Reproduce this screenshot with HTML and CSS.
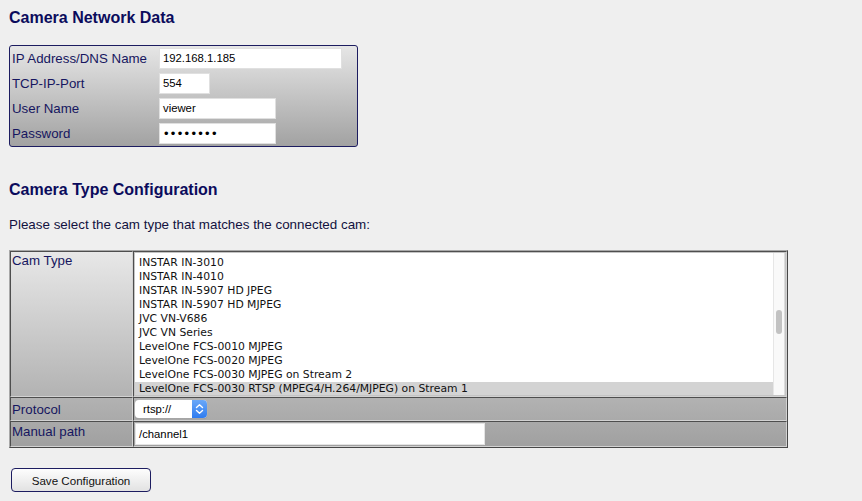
FILE: index.html
```html
<!DOCTYPE html>
<html>
<head>
<meta charset="utf-8">
<link rel="stylesheet" href="styles.css">
</head>
<body>
<h1 class="title first">Camera Network Data</h1>
<div class="netbox">
  <label class="lbl">IP Address/DNS Name</label>
  <div class="field w-ip">192.168.1.185</div>
  <label class="lbl">TCP-IP-Port</label>
  <div class="field w-port">554</div>
  <label class="lbl">User Name</label>
  <div class="field w-user">viewer</div>
  <label class="lbl">Password</label>
  <div class="field w-user pw">&#8226;&#8226;&#8226;&#8226;&#8226;&#8226;&#8226;&#8226;</div>
</div>

<h1 class="title second">Camera Type Configuration</h1>
<p class="intro">Please select the cam type that matches the connected cam:</p>

<table class="cfg">
  <tr class="row-cam">
    <td class="lcell">Cam Type</td>
    <td class="ccell flush">
      <div class="listbox">
        <div class="opts">
          <div class="opt">INSTAR IN-3010</div>
          <div class="opt">INSTAR IN-4010</div>
          <div class="opt">INSTAR IN-5907 HD JPEG</div>
          <div class="opt">INSTAR IN-5907 HD MJPEG</div>
          <div class="opt">JVC VN-V686</div>
          <div class="opt">JVC VN Series</div>
          <div class="opt">LevelOne FCS-0010 MJPEG</div>
          <div class="opt">LevelOne FCS-0020 MJPEG</div>
          <div class="opt">LevelOne FCS-0030 MJPEG on Stream 2</div>
          <div class="opt sel">LevelOne FCS-0030 RTSP (MPEG4/H.264/MJPEG) on Stream 1</div>
        </div>
        <div class="sbar"><div class="thumb"></div></div>
      </div>
    </td>
  </tr>
  <tr class="row-proto">
    <td class="lcell">Protocol</td>
    <td class="ccell">
      <div class="popup">
        <span class="ptext">rtsp://</span>
        <span class="parrow">
          <svg width="9" height="12" viewBox="0 0 9 12"><path d="M1.5 4.5 L4.5 1.8 L7.5 4.5 M1.5 7.5 L4.5 10.2 L7.5 7.5" fill="none" stroke="#fff" stroke-width="1.4" stroke-linecap="round" stroke-linejoin="round"/></svg>
        </span>
      </div>
    </td>
  </tr>
  <tr class="row-path">
    <td class="lcell">Manual path</td>
    <td class="ccell">
      <div class="field w-path">/channel1</div>
    </td>
  </tr>
</table>

<button class="save">Save Configuration</button>
</body>
</html>
```
FILE: styles.css
```css
html, body {
  margin: 0;
  padding: 0;
  background: #efefef;
}
body {
  padding: 0 9px;
  font-family: "Liberation Sans", Arial, sans-serif;
  font-size: 13.3px;
  color: #14145a;
}
.title {
  font-size: 16px;
  line-height: 20px;
  font-weight: bold;
  color: #0b0b5c;
  margin: 0;
}
.title.first { padding-top: 8px; margin-bottom: 17px; }
.title.second { margin-top: 33px; margin-bottom: 17px; }
.intro {
  margin: 0 0 17px;
  line-height: 16px;
  font-size: 13.4px;
  color: #121240;
}

.netbox {
  width: 343px;
  box-sizing: content-box;
  border: 1px solid #1c1c60;
  border-radius: 3px;
  background: linear-gradient(#e6e6e6, #a2a2a2);
  padding: 2px 2px 2px 2px;
  display: grid;
  grid-template-columns: 147px auto;
  grid-auto-rows: 21px;
  row-gap: 4px;
  align-items: center;
}
.lbl {
  color: #161660;
  font-size: 13.3px;
  padding-left: 0;
}
.field {
  background: #fff;
  border: 1px solid #e0e0e0;
  box-sizing: border-box;
  height: 21px;
  line-height: 19px;
  font-size: 11.3px;
  color: #000;
  padding-left: 3px;
}
.w-ip { width: 183px; }
.w-port { width: 51px; }
.w-user { width: 117px; }
.pw { font-size: 13px; letter-spacing: 2.3px; padding-left: 4px; }

.cfg {
  border-collapse: separate;
  border-spacing: 0;
  border: 1px solid;
  border-color: #a8a8a8 #474747 #474747 #a8a8a8;
  background: linear-gradient(#e8e8e8, #a0a0a0);
  width: 779px;
}
.cfg td {
  border: 1px solid;
  border-color: #4e4e4e #d2d2d2 #d2d2d2 #4e4e4e;
  padding: 0;
  vertical-align: top;
}
.lcell {
  width: 120px;
  padding-left: 1px !important;
  color: #161660;
  font-size: 13.3px;
  line-height: 16px;
}
.row-cam .lcell { padding-top: 1px !important; }
.row-proto td { height: 22px; }
.row-proto .lcell { padding-top: 4px !important; height: 18px; }
.row-path td { height: 24px; }
.row-path .lcell { padding-top: 2px !important; height: 22px; }
.ccell { padding-left: 1px !important; }
.ccell.flush { padding: 0 !important; }
.row-proto .ccell { padding-top: 2px !important; height: 20px; }
.row-path .ccell { padding-top: 1px !important; height: 23px; }

.listbox {
  height: 144px;
  box-sizing: border-box;
  border: 1px solid #c4c4c4;
  background: #fff;
  display: flex;
  overflow: hidden;
}
.opts {
  flex: 1;
  padding-top: 3px;
  font-family: "DejaVu Sans", Verdana, sans-serif;
  font-size: 10.8px;
  color: #111;
}
.opt {
  height: 14px;
  line-height: 14px;
  padding-left: 4px;
  white-space: nowrap;
}
.opt.sel {
  background: #d3d3d3;
  height: 16px;
}
.sbar {
  width: 10px;
  background: #f9f9f9;
  border-left: 1px solid #e6e6e6;
  border-right: 1px solid #dcdcdc;
  position: relative;
}
.thumb {
  position: absolute;
  left: 2px;
  top: 57px;
  width: 6px;
  height: 24px;
  border-radius: 3px;
  background: #c2c2c2;
}

.popup {
  width: 72px;
  height: 18px;
  border-radius: 4px;
  background: #fff;
  box-shadow: 0 0 0 0.5px #b8b8b8, 0 1px 1px rgba(0,0,0,0.15);
  display: flex;
  overflow: hidden;
  font-size: 11.3px;
  color: #000;
}
.ptext {
  flex: 1;
  line-height: 18px;
  padding-left: 8px;
}
.parrow {
  width: 15px;
  background: linear-gradient(#6aa8f8, #2f7cf0);
  display: flex;
  align-items: center;
  justify-content: center;
}
.w-path {
  width: 350px;
  height: 22px;
  line-height: 20px;
  border-color: #e4e4e4;
}

.save {
  margin: 20px 0 0 2px;
  width: 140px;
  height: 24px;
  border: 1px solid #1c1c60;
  border-radius: 4px;
  background: linear-gradient(#fdfdfd, #e2e2e2);
  font-family: "Liberation Sans", Arial, sans-serif;
  font-size: 11.6px;
  color: #111;
  padding: 0;
}
```
